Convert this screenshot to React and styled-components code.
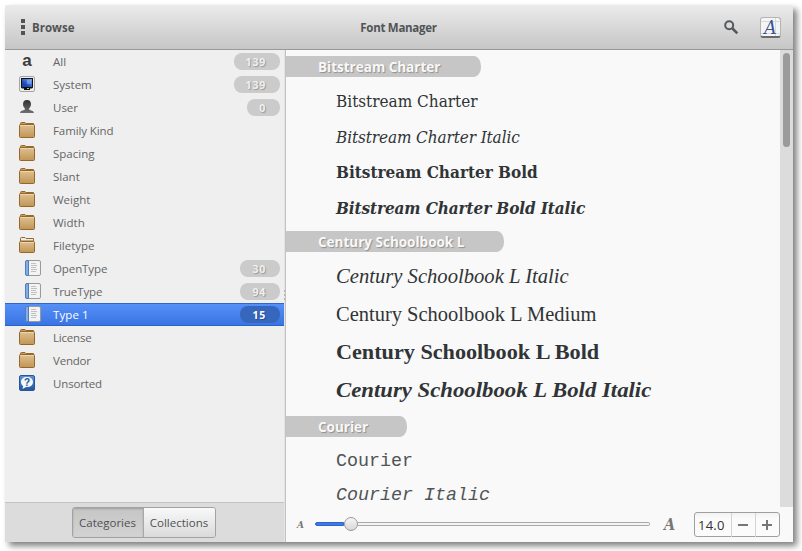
import React from 'react';
import styled, { createGlobalStyle, css } from 'styled-components';

const GlobalStyle = createGlobalStyle`
  * { box-sizing: border-box; }
  body {
    margin: 0;
    background: #fff;
    font-family: "Open Sans", "Noto Sans", sans-serif;
    font-size: 11.5px;
    color: #666;
  }
  svg { display: block; }
`;

const Desktop = styled.main`
  width: 802px;
  height: 551px;
  padding: 5px 9px 9px 5px;
  overflow: hidden;
`;

const Window = styled.div`
  height: 537px;
  display: flex;
  flex-direction: column;
  background: #f9f9f9;
  border-radius: 2px 2px 0 0;
  box-shadow: 4px 4px 6px rgba(0, 0, 0, 0.5);
`;

const HeaderBar = styled.header`
  height: 45px;
  display: grid;
  grid-template-columns: 1fr auto 1fr;
  align-items: center;
  padding: 0 12px 0 16px;
  border-bottom: 1px solid #999;
  border-radius: 2px 2px 0 0;
  background: linear-gradient(#ebebeb, #c6c6c6);
  color: #515456;
  font-weight: bold;
`;

const BrowseButton = styled.div`
  display: flex;
  align-items: center;
  gap: 7px;
`;

const Title = styled.h1`
  margin: 0 0 0 -5px;
  font-size: 11.5px;
  letter-spacing: -0.28px;
`;

const HeaderTools = styled.div`
  display: flex;
  align-items: center;
  justify-content: flex-end;
  gap: 21px;
`;

const Body = styled.div`
  flex: 1;
  min-height: 0;
  display: flex;
`;

const Sidebar = styled.aside`
  width: 279px;
  display: flex;
  flex-direction: column;
  background: #efefef;
`;

const Handle = styled.div`
  width: 2px;
  display: flex;
  align-items: flex-start;
  background: #e4e4e4;
  border-right: 1px solid #c2c2c2;
`;

const Grip = styled.span`
  width: 1px;
  height: 11px;
  margin-top: 240px;
  background: repeating-linear-gradient(#b4b4b4 0 2px, #e8e8e8 2px 4px);
`;

const CategoryList = styled.nav`
  flex: 1;
`;

const Row = styled.div`
  height: 23px;
  display: flex;
  align-items: center;
  padding: 0 4px 0 14px;
  ${({ $selected }) => $selected && css`
    color: #fff;
    background: linear-gradient(#5490f7, #3a74e3);
    border-top: 1px solid #2f66cf;
    border-bottom: 1px solid #2a62cc;
  `}
`;

const IconSlot = styled.span`
  width: 34px;
  padding: 0 0 1px ${({ $indent }) => ($indent ? '6px' : '0')};
`;

const Label = styled.span`
  flex: 1;
  letter-spacing: ${({ $tracking = 0 }) => $tracking}px;
`;

const Count = styled.span`
  height: 17px;
  padding: 0 14px 0 12px;
  border-radius: 8px;
  background: ${({ $selected }) => ($selected ? '#3767bd' : '#cbcbcb')};
  color: ${({ $selected }) => ($selected ? '#fff' : '#efefef')};
  text-shadow: 1px 1px 1px ${({ $selected }) => ($selected ? '#20479c' : '#999')};
  font-size: 10.5px;
  font-weight: bold;
  line-height: 18px;
  letter-spacing: 0.8px;
`;

const SidebarFooter = styled.div`
  height: 40px;
  display: flex;
  justify-content: center;
  align-items: flex-start;
  padding: 4px 2px 0 0;
  border-top: 1px solid #c4c4c4;
  background: #dcdcdc;
`;

const ToggleGroup = styled.div`
  height: 31px;
  display: flex;
  border: 1px solid #a2a2a2;
  border-radius: 3px;
  overflow: hidden;
`;

const Toggle = styled.span`
  width: 71px;
  display: flex;
  align-items: center;
  justify-content: center;
  color: #4f5254;
  background: linear-gradient(#f9f9f9, #dadada);
  ${({ $active }) => $active && css`
    background: linear-gradient(#c5c5c5, #d3d3d3);
    border-right: 1px solid #a8a8a8;
    box-shadow: inset 0 1px 2px rgba(0, 0, 0, 0.2);
  `}
`;

const Content = styled.section`
  flex: 1;
  display: flex;
  flex-direction: column;
  background: #f9f9f9;
`;

const Viewport = styled.div`
  height: 457px;
  display: flex;
  overflow: hidden;
`;

const Previews = styled.div`
  flex: 1;
  padding-top: 6px;
`;

const ScrollTrack = styled.div`
  width: 13px;
  padding: 3px 3px 0;
  background: #dcdcdc;
`;

const ScrollThumb = styled.div`
  height: 94px;
  border-radius: 4px;
  background: #9b9b9b;
`;

const FamilyHeader = styled.h2`
  width: ${({ $width }) => $width}px;
  height: 21px;
  margin: 0;
  padding-left: 32px;
  border-radius: 0 7px 7px 0 / 0 10px 10px 0;
  background: #c6c6c6;
  color: #f8f8f8;
  text-shadow: 1px 1px 1px #909090;
  font-size: 13.5px;
  font-weight: bold;
  line-height: 22px;
  white-space: nowrap;
`;

const FaceList = styled.div`
  padding: ${({ $top }) => `${$top}px 0 ${12 - $top}px 50px`};
  color: ${({ $ink }) => $ink};
  font-family: ${({ $font }) => $font};
  font-size: ${({ $size }) => $size}px;
  line-height: ${({ $line }) => $line}px;
`;

const Face = styled.div`
  height: ${({ $line }) => $line}px;
  font-weight: ${({ $bold }) => ($bold ? 'bold' : 'normal')};
  font-style: ${({ $italic }) => ($italic ? 'italic' : 'normal')};
  letter-spacing: ${({ $tracking = 0 }) => $tracking}px;
  white-space: nowrap;
  transform-origin: left;
  ${({ $stretch }) => $stretch && css`transform: scaleX(${$stretch});`}
`;

const SizeBar = styled.footer`
  height: 35px;
  display: flex;
  align-items: center;
  padding: 0 13px 0 11px;
`;

const SizeMark = styled.span`
  width: ${({ $large }) => ($large ? 31 : 18)}px;
  color: #777;
  font-family: "DejaVu Serif Condensed", "DejaVu Serif", serif;
  font-size: ${({ $large }) => ($large ? 16 : 10)}px;
  font-weight: bold;
  font-style: italic;
  line-height: 20px;
`;

const Slider = styled.div`
  width: 335px;
  height: 16px;
  margin: 0 14px 1px 0;
  display: flex;
  align-items: center;
`;

const SliderFill = styled.span`
  width: 29px;
  height: 4px;
  border-radius: 2px 0 0 2px;
  background: #3d7ae8;
  border: 1px solid #2f64c8;
`;

const Knob = styled.span`
  width: 14px;
  height: 14px;
  border: 1px solid #999;
  border-radius: 50%;
  background: linear-gradient(#f6f6f6, #d8d8d8);
`;

const SliderRest = styled.span`
  flex: 1;
  height: 4px;
  border: 1px solid #aaa;
  border-left: 0;
  border-radius: 0 2px 2px 0;
  background: #f4f4f4;
`;

const SpinBox = styled.div`
  width: 86px;
  height: 25px;
  margin-left: -1px;
  display: grid;
  grid-template-columns: 36px 24px 24px;
  border: 1px solid #a0a0a0;
  border-radius: 3px;
  background: linear-gradient(#f2f2f2, #fbfbfb 25%);
`;

const SpinValue = styled.span`
  padding-left: 3px;
  color: #303436;
  font-size: 13px;
  line-height: 24px;
  letter-spacing: 0.2px;
`;

const SpinButton = styled.span`
  display: flex;
  align-items: center;
  padding-left: 6px;
  border-left: 1px solid #d4d4d4;
`;

const LetterGlyph = styled.span`
  display: block;
  width: 16px;
  height: 16px;
  text-align: center;
  color: #3c3c3c;
  font: bold 17px/15px "Liberation Sans", sans-serif;
`;

const AppIcon = styled.span`
  width: 21px;
  height: 21px;
  border: 1px solid #b4b4b4;
  border-bottom: 2px solid #6a6a6a;
  border-radius: 3px;
  background:
    linear-gradient(#dadada, #dadada) 0 3px / 100% 1px no-repeat,
    linear-gradient(#dadada, #dadada) 0 15px / 100% 1px no-repeat,
    linear-gradient(90deg, #dadada, #dadada) 14px 0 / 1px 100% no-repeat,
    #f5f5f5;
  color: #35558c;
  font: italic 19px/18px "DejaVu Serif Condensed", "DejaVu Serif", serif;
  text-align: center;
`;

const MenuDots = () => (
  <svg width="4" height="16" fill="#515456">
    <path d="M0 0h4v4H0zM0 6h4v4H0zM0 12h4v4H0z" />
  </svg>
);

const SearchIcon = () => (
  <svg width="15" height="15" fill="none" stroke="#55585a">
    <circle cx="5.2" cy="5.2" r="4" strokeWidth="2" />
    <path d="M8.500 8.500L13.300 13.300" strokeWidth="2.6" />
  </svg>
);

const MonitorIcon = () => (
  <svg width="16" height="16">
    <defs>
      <linearGradient id="screen" x1="0" y1="1" x2="1" y2="0">
        <stop offset="0.3" stopColor="#1748b4" />
        <stop offset="1" stopColor="#7aa8f0" />
      </linearGradient>
    </defs>
    <rect x="0.5" y="0.5" width="15" height="15" rx="1.5" fill="#ededed" stroke="#a5a5a5" />
    <path d="M2 2h12v9.5l-1 1H11V14H5v-1.500H3l-1-1z" fill="#111" />
    <rect x="3" y="3" width="10" height="8" fill="url(#screen)" />
    <path d="M8 4h4v4H8z" fill="#92b8f4" opacity="0.5" />
    <path d="M8 12h2v1H8z" fill="#b9d820" />
  </svg>
);

const UserIcon = () => (
  <svg width="16" height="16">
    <defs>
      <linearGradient id="person" x1="0" y1="0" x2="0" y2="1">
        <stop offset="0" stopColor="#303030" />
        <stop offset="1" stopColor="#707070" />
      </linearGradient>
    </defs>
    <path d="M8 1c2.600 0 4 1.600 4 4.200 0 1.700-.8 3-1.800 4v1.600c1.600.9 4.300.8 4.800 3.200H1c.5-2.400 3.200-2.300 4.800-3.200V9.200C4.800 8.200 4 6.900 4 5.200 4 2.600 5.400 1 8 1z" fill="url(#person)" />
  </svg>
);

const FolderIcon = ({ open }) => (
  <svg width="16" height="16">
    <defs>
      <linearGradient id="folder" x1="0" y1="0" x2="0" y2="1">
        <stop offset="0" stopColor="#dfc190" />
        <stop offset="1" stopColor="#c19556" />
      </linearGradient>
    </defs>
    <path d="M1.500 4V1.500q0-1 1-1H6l1 1h7.500V4z" fill={open ? '#ececec' : '#c49a5e'} stroke="#96672b" />
    <rect x="0.5" y={open ? 4.5 : 2.5} width="15" height={open ? 11 : 13} rx="1" fill="url(#folder)" stroke="#96672b" />
    <path d={open ? 'M1.500 5.500h13' : 'M1.500 3.500h13'} stroke="#ecd6ae" />
  </svg>
);

const DocumentIcon = () => (
  <svg width="16" height="16">
    <rect x="0.5" y="0.5" width="15" height="15" rx="1.5" fill="#f3f3f3" stroke="#9a9a9a" />
    <path d="M3.500 .5H2Q.5.5.5 2v12q0 1.500 1.500 1.500h1.500z" fill="#86aee6" stroke="#4f7cba" />
    <path d="M6 3.500h5M6 5.500h6M6 7.500h5M6 9.500h6M6 11.500h5" stroke="#c0c0c0" />
  </svg>
);

const HelpMark = styled.text`
  font: bold 10px "Liberation Sans", sans-serif;
  fill: #24508f;
`;

const UnsortedIcon = () => (
  <svg width="16" height="16">
    <defs>
      <linearGradient id="help" x1="0" y1="0" x2="0" y2="1">
        <stop offset="0" stopColor="#5b93dc" />
        <stop offset="1" stopColor="#24549f" />
      </linearGradient>
    </defs>
    <rect x="0.5" y="0.5" width="15" height="15" rx="1.5" fill="url(#help)" stroke="#2b5596" />
    <path d="M8 2c3.600 0 6 2 6 5s-2.400 5-6 5l-.9-.1L3.500 14l.7-3C2.700 10 2 8.700 2 7c0-3 2.400-5 6-5z" fill="#f4f7fb" />
    <HelpMark x="8" y="10.5" textAnchor="middle">?</HelpMark>
  </svg>
);

const ICONS = {
  letter: <LetterGlyph>a</LetterGlyph>,
  monitor: <MonitorIcon />,
  user: <UserIcon />,
  folder: <FolderIcon />,
  folderOpen: <FolderIcon open />,
  document: <DocumentIcon />,
  unsorted: <UnsortedIcon />,
};

const CATEGORIES = [
  { label: 'All', icon: 'letter', count: 139 },
  { label: 'System', icon: 'monitor', count: 139 },
  { label: 'User', icon: 'user', count: 0 },
  { label: 'Family Kind', icon: 'folder', tracking: -0.1 },
  { label: 'Spacing', icon: 'folder' },
  { label: 'Slant', icon: 'folder' },
  { label: 'Weight', icon: 'folder' },
  { label: 'Width', icon: 'folder' },
  { label: 'Filetype', icon: 'folderOpen' },
  { label: 'OpenType', icon: 'document', count: 30, indent: true, tracking: -0.1 },
  { label: 'TrueType', icon: 'document', count: 94, indent: true, tracking: -0.1 },
  { label: 'Type 1', icon: 'document', count: 15, indent: true, selected: true, tracking: 0.1 },
  { label: 'License', icon: 'folder', tracking: -0.2 },
  { label: 'Vendor', icon: 'folder', tracking: -0.2 },
  { label: 'Unsorted', icon: 'unsorted', tracking: -0.15 },
];

const FAMILIES = [
  {
    name: 'Bitstream Charter',
    width: 195,
    font: '"DejaVu Serif Condensed", "DejaVu Serif", serif',
    ink: '#303436',
    size: 17,
    line: 35.5,
    top: 7,
    faces: [
      { name: 'Bitstream Charter' },
      { name: 'Bitstream Charter Italic', italic: true, tracking: -0.1 },
      { name: 'Bitstream Charter Bold', bold: true },
      { name: 'Bitstream Charter Bold Italic', bold: true, italic: true, tracking: -0.1 },
    ],
  },
  {
    name: 'Century Schoolbook L',
    width: 218,
    font: '"Liberation Serif", serif',
    ink: '#303436',
    size: 20,
    line: 38,
    top: 5,
    faces: [
      { name: 'Century Schoolbook L Italic', italic: true, stretch: 1.031 },
      { name: 'Century Schoolbook L Medium', stretch: 1.024 },
      { name: 'Century Schoolbook L Bold', bold: true, stretch: 1.109 },
      { name: 'Century Schoolbook L Bold Italic', bold: true, italic: true, stretch: 1.138 },
    ],
  },
  {
    name: 'Courier',
    width: 121,
    font: '"Liberation Mono", monospace',
    ink: '#505456',
    size: 18.33,
    line: 34,
    top: 8,
    faces: [{ name: 'Courier' }, { name: 'Courier Italic', italic: true }],
  },
];

export default function App() {
  return (
    <Desktop>
      <GlobalStyle />
      <Window>
        <HeaderBar>
          <BrowseButton><MenuDots />Browse</BrowseButton>
          <Title>Font Manager</Title>
          <HeaderTools>
            <SearchIcon />
            <AppIcon>A</AppIcon>
          </HeaderTools>
        </HeaderBar>
        <Body>
          <Sidebar>
            <CategoryList>
              {CATEGORIES.map(({ label, icon, count, indent, selected, tracking }) => (
                <Row key={label} $selected={selected}>
                  <IconSlot $indent={indent}>{ICONS[icon]}</IconSlot>
                  <Label $tracking={tracking}>{label}</Label>
                  {count !== undefined && <Count $selected={selected}>{count}</Count>}
                </Row>
              ))}
            </CategoryList>
            <SidebarFooter>
              <ToggleGroup>
                <Toggle $active>Categories</Toggle>
                <Toggle>Collections</Toggle>
              </ToggleGroup>
            </SidebarFooter>
          </Sidebar>
          <Handle><Grip /></Handle>
          <Content>
            <Viewport>
              <Previews>
                {FAMILIES.map(({ name, width, font, ink, size, line, top, faces }) => (
                  <div key={name}>
                    <FamilyHeader $width={width}>{name}</FamilyHeader>
                    <FaceList $font={font} $ink={ink} $size={size} $line={line} $top={top}>
                      {faces.map((face) => (
                        <Face
                          key={face.name}
                          $line={line}
                          $bold={face.bold}
                          $italic={face.italic}
                          $tracking={face.tracking}
                          $stretch={face.stretch}
                        >
                          {face.name}
                        </Face>
                      ))}
                    </FaceList>
                  </div>
                ))}
              </Previews>
              <ScrollTrack><ScrollThumb /></ScrollTrack>
            </Viewport>
            <SizeBar>
              <SizeMark>A</SizeMark>
              <Slider><SliderFill /><Knob /><SliderRest /></Slider>
              <SizeMark $large>A</SizeMark>
              <SpinBox>
                <SpinValue>14.0</SpinValue>
                <SpinButton>
                  <svg width="10" height="10"><path d="M0 4h10v2H0z" fill="#777" /></svg>
                </SpinButton>
                <SpinButton>
                  <svg width="10" height="10"><path d="M0 4h4V0h2v4h4v2H6v4H4V6H0z" fill="#777" /></svg>
                </SpinButton>
              </SpinBox>
            </SizeBar>
          </Content>
        </Body>
      </Window>
    </Desktop>
  );
}
